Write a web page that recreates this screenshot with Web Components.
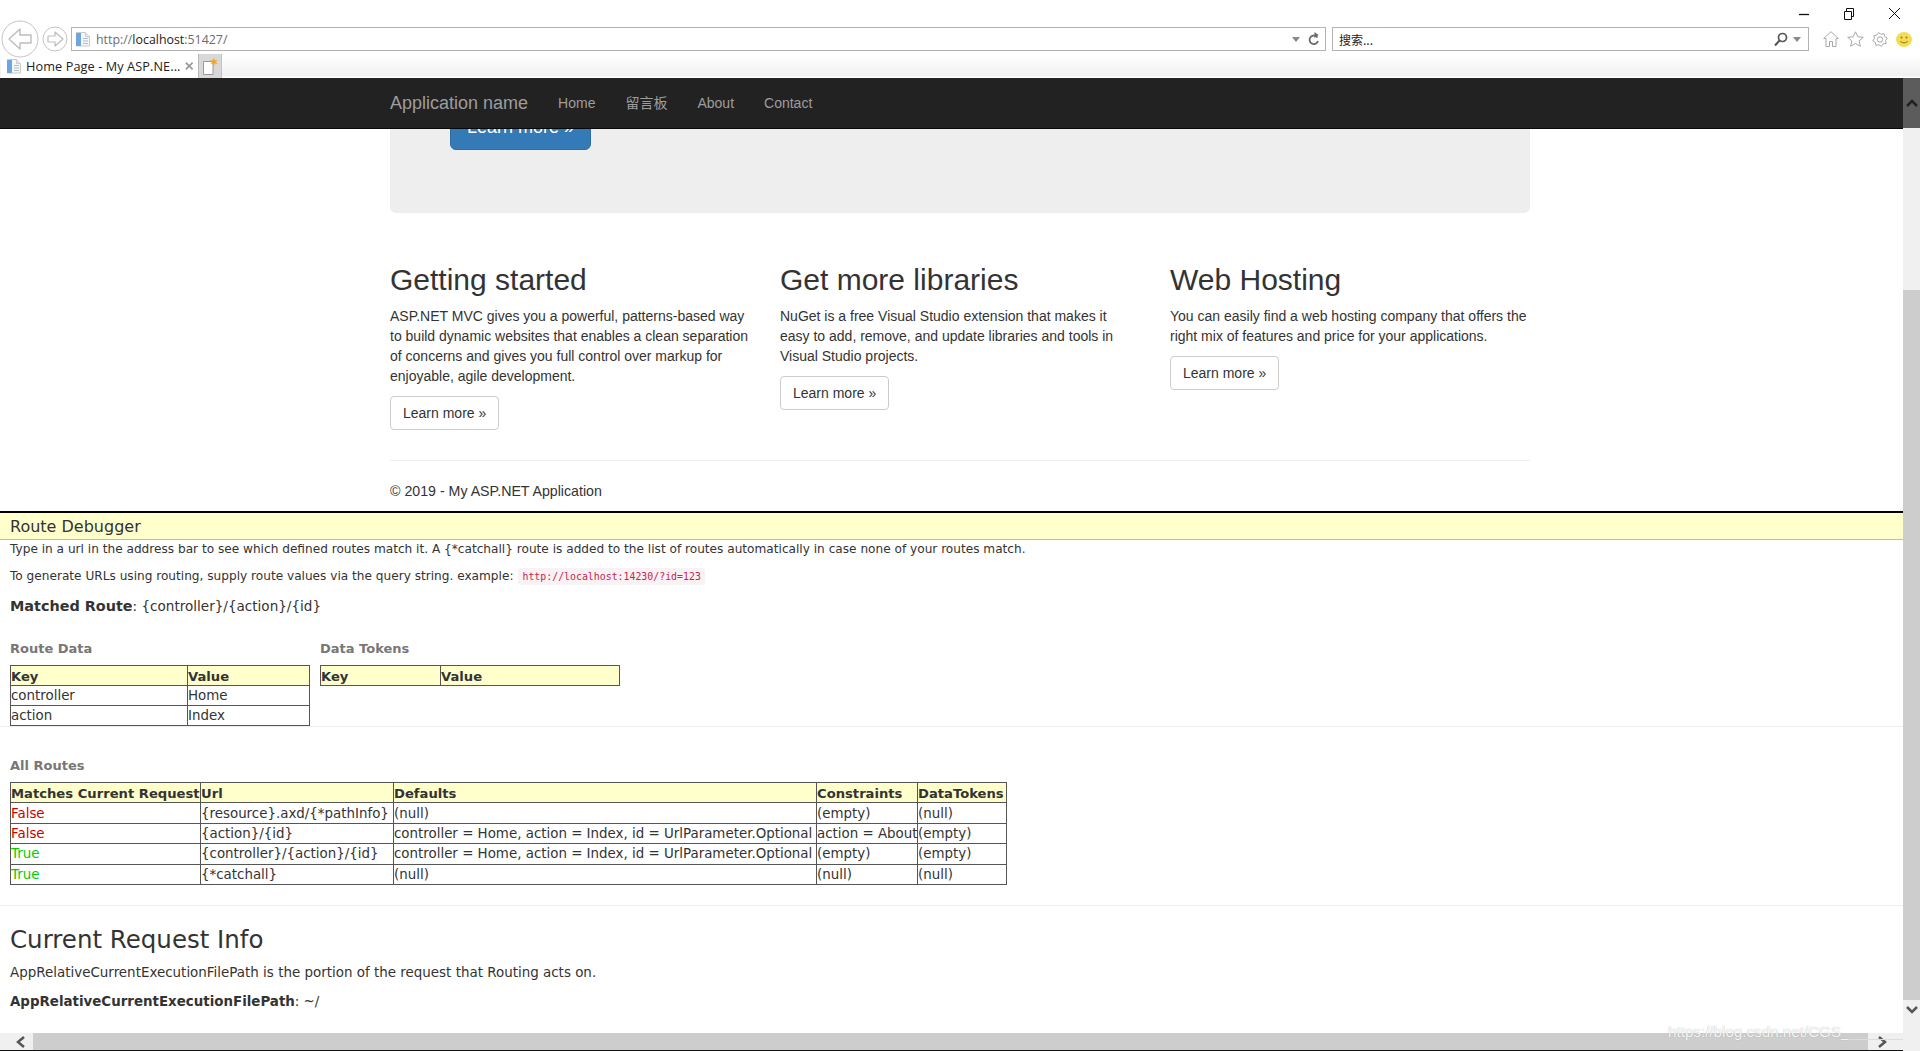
<!DOCTYPE html>
<html><head><meta charset="utf-8"><title>Home Page - My ASP.NET Application</title>
<style>
html,body{margin:0;height:100%;overflow:hidden;background:#fff}
app-shell{display:flex;flex-direction:column;height:1051px;width:1920px;position:relative;overflow:hidden}
</style></head><body>
<app-shell>
  <ie-chrome></ie-chrome>
  <site-navbar></site-navbar>
  <page-view>
    <site-content></site-content>
    <route-debugger></route-debugger>
  </page-view>
  <h-scrollbar></h-scrollbar>
  <v-scrollbar></v-scrollbar>
</app-shell>
<script>
function def(name, html){
  customElements.define(name, class extends HTMLElement{
    constructor(){super();this.attachShadow({mode:'open'}).innerHTML=html;}
  });
}
const pageIcon=`<svg width="16" height="16" viewBox="0 0 16 16" style="flex:none"><path d="M1.500 1.500h9l4 4v9.500h-13z" fill="#f4f6f8" stroke="#c8ccd0"/><path d="M10.500 1.500v4h4" fill="#e4e8ec" stroke="#c8ccd0"/><rect x="1" y="2" width="5" height="13" fill="#6ba6dc"/><path d="M8 7.500h5M8 10h5M8 12.500h5" stroke="#b5bcc4"/></svg>`;
let gear='';
for(let i=0;i<16;i++){const a=(i+.5)*Math.PI/8,r=i%2?7.4:5.6;gear+=(i?'L':'M')+(8+r*Math.cos(a)).toFixed(2)+' '+(7.5+r*.95*Math.sin(a)).toFixed(2);}
gear+='z';
def('ie-chrome',`<style>
:host{display:block;height:78px;background:#fff;font:12px "Open Sans","Noto Sans",sans-serif;color:#333;flex:none}
.win{height:27px;display:flex;justify-content:flex-end;align-items:center;padding:0 19px 0 0;gap:33px;box-sizing:border-box}
.win svg{display:block}
.bar{height:27px;display:flex;align-items:flex-start;box-sizing:border-box;padding-left:1px;position:relative}
.nav{display:flex;align-items:flex-start;width:70px;flex:none}
.field{height:24px;box-sizing:border-box;border:1px solid #b3b3b3;display:flex;align-items:center;background:#fff}
.addr{width:1255px;flex:none;padding:0 5px 0 3px;gap:5px}
.addr .u{flex:1;color:#6d6d6d;font-size:12.400px}.addr .u b{font-weight:400;color:#222}
.search{width:477px;flex:none;margin-left:6px;padding:0 7px 0 6px;font:12px "Noto Sans CJK SC",sans-serif;color:#222}
.search span{flex:1}
.tools{display:flex;gap:8px;margin-left:14px;align-items:center;height:24px}
.tools svg{display:block}
.tabs{height:24px;display:flex;background:linear-gradient(#fff 0,#fff 2px,#efefef 22px,#fff 23px);align-items:stretch}
.tab{margin-left:1px;width:198px;box-sizing:border-box;background:#fff;display:flex;align-items:center;padding:0 5px 0 5px;gap:4px;font-size:12.700px;color:#222;white-space:nowrap;border-right:1px solid #b8b8b8;letter-spacing:.1px}
.tab span{flex:1}
.new{width:23px;background:#d8d8d8;border-right:1px solid #c2c2c2;display:flex;align-items:center;justify-content:center;box-sizing:border-box}
</style>
<div class="win">
<svg width="12" height="12" viewBox="0 0 12 12"><path d="M1 6.500h10" stroke="#111" stroke-width="1.300"/></svg>
<svg width="12" height="12" viewBox="0 0 12 12" fill="none" stroke="#111"><path d="M1.500 3.500h7v8h-7z"/><path d="M3.500 3V.500h7v8H8.500"/></svg>
<svg width="13" height="13" viewBox="0 0 13 13"><path d="M1 1l11 11M12 1L1 12" stroke="#111" fill="none"/></svg>
</div>
<div class="bar">
 <div class="nav">
  <svg width="38" height="38" viewBox="0 0 38 38" style="flex:none;margin-top:-7px"><circle cx="19" cy="19" r="18" fill="#fff" stroke="#c4c4c4"/><path d="M8 19l11-10v6h11v8H19v6z" fill="#fff" stroke="#bdbdbd" stroke-width="1.400" stroke-linejoin="round"/></svg>
  <svg width="26" height="26" viewBox="0 0 26 26" style="flex:none;margin:-1px 0 0 3px"><circle cx="13" cy="13" r="12" fill="#fff" stroke="#c4c4c4"/><path d="M21 13l-8-7v4H6v6h7v4z" fill="#fff" stroke="#bdbdbd" stroke-width="1.200" stroke-linejoin="round"/></svg>
 </div>
 <div class="field addr">${pageIcon}<span class="u">http://<b>localhost</b>:51427/</span>
  <svg width="8" height="5" viewBox="0 0 8 5"><path d="M0 0h8L4 5z" fill="#888"/></svg>
  <svg width="12" height="14" viewBox="0 0 12 14" style="margin-left:3px"><path d="M9.500 5.500A4.300 4.300 0 1 0 10 9" fill="none" stroke="#6a6a6a" stroke-width="1.800"/><path d="M6.500 0v6l4-3z" fill="#6a6a6a"/></svg>
 </div>
 <div class="field search"><span>搜索...</span>
  <svg width="14" height="15" viewBox="0 0 14 15"><circle cx="8.500" cy="5.500" r="4" fill="none" stroke="#555" stroke-width="1.700"/><path d="M5.500 8.500L1 13.500" stroke="#555" stroke-width="2"/></svg>
  <svg width="8" height="5" viewBox="0 0 8 5" style="margin-left:5px"><path d="M0 0h8L4 5z" fill="#888"/></svg>
 </div>
 <div class="tools">
  <svg width="16" height="16" viewBox="0 0 16 16" fill="#fff" stroke="#a8a8a8"><path d="M8 .700L.700 7.500h2.300v8h3.500v-5h3v5h3.500v-8h2.300z"/></svg>
  <svg width="17" height="16" viewBox="0 0 17 16" fill="#fff" stroke="#a8a8a8"><path d="M8.500 .800l2.300 5 5.500.5-4.200 3.600 1.300 5.400-4.900-2.800-4.900 2.800 1.300-5.400L.7 6.300l5.500-.5z"/></svg>
  <svg width="16" height="15" viewBox="0 0 16 15" fill="#fff" stroke="#a8a8a8"><path d="${gear}"/><circle cx="8" cy="7.500" r="2.700"/></svg>
  <svg width="16" height="15" viewBox="0 0 16 15"><ellipse cx="8" cy="7.500" rx="8" ry="7.500" fill="#f4dc55"/><circle cx="5.500" cy="5.500" r="1" fill="#8a7a20"/><circle cx="10.500" cy="5.500" r="1" fill="#8a7a20"/><path d="M4 9c2 2.500 6 2.500 8 0" fill="none" stroke="#8a7a20"/></svg>
 </div>
</div>
<div class="tabs">
 <div class="tab">${pageIcon}<span>Home Page - My ASP.NE...</span><svg width="10" height="10" viewBox="0 0 10 10"><path d="M1 1l8 8M9 1l-8 8" stroke="#9a9a9a" stroke-width="2"/></svg></div>
 <div class="new"><svg width="15" height="17" viewBox="0 0 15 17"><path d="M.500 3.500h9.500v13H.500z" fill="#fff" stroke="#999"/><path d="M11 0l1 2.500 2.500-.5-1.500 2 1.500 2-2.500-.5-1 2.500-1-2.500-2.500.5 1.500-2L7 2l2.500.5z" fill="#f5a623"/></svg></div>
</div>`);
def('site-navbar',`<style>
:host{display:block;height:51px;box-sizing:border-box;background:#222;border-bottom:1px solid #080808;font:14px/20px "Liberation Sans",Arial,"Noto Sans CJK SC",sans-serif;color:#9d9d9d;flex:none}
.c{width:1140px;margin:0 auto;display:flex;align-items:center;height:50px}
.b{font-size:18px;margin-right:15px}
a{padding:15px;color:#9d9d9d;text-decoration:none;white-space:nowrap}
</style><div class="c"><span class="b">Application name</span><a>Home</a><a>留言板</a><a>About</a><a>Contact</a></div>`);
def('page-view',`<style>:host{display:block;flex:1;min-height:0;overflow:hidden;font:14px/20px "Liberation Sans",Arial,sans-serif;color:#333}</style><slot></slot>`);
def('info-col',`<style>
:host{display:block;width:360px;box-sizing:content-box;padding:0 15px}
h2{font-weight:500;font-size:30px;line-height:33px;margin:20px 0 10px;color:#333}
p{margin:0 0 10px}
a{display:inline-block;padding:6px 12px;border:1px solid #ccc;border-radius:4px;line-height:20px;color:#333}
</style><h2><slot name="t"></slot></h2><p><slot></slot></p><p><a>Learn more »</a></p>`);
def('site-content',`<style>
:host{display:block;width:1140px;margin:0 auto}
.j{background:#eee;margin-bottom:30px;padding:0 60px;height:84px;overflow:hidden;border-radius:0 0 6px 6px}
.l{display:block;width:141px;height:46px;margin-top:-25px;box-sizing:border-box;background:#337ab7;border:1px solid #2e6da4;border-radius:6px;color:#fff;font-size:18px;line-height:24px;padding:10px 16px;white-space:nowrap}
.r{display:flex;margin:0 -15px}
hr{border:0;border-top:1px solid #eee;margin:20px 0}
p{margin:0 0 10px;font-size:14.200px}
</style>
<div class="j"><a class="l">Learn more »</a></div>
<div class="r">
<info-col><span slot="t">Getting started</span>ASP.NET MVC gives you a powerful, patterns-based way to build dynamic websites that enables a clean separation of concerns and gives you full control over markup for enjoyable, agile development.</info-col>
<info-col><span slot="t">Get more libraries</span>NuGet is a free Visual Studio extension that makes it easy to add, remove, and update libraries and tools in Visual Studio projects.</info-col>
<info-col><span slot="t">Web Hosting</span>You can easily find a web hosting company that offers the right mix of features and price for your applications.</info-col>
</div>
<hr><p>© 2019 - My ASP.NET Application</p>`);
customElements.define('route-table',class extends HTMLElement{
  constructor(){super();this.attachShadow({mode:'open'});}
  connectedCallback(){
    const cols=this.getAttribute('cols').split(',').map(Number);
    const rows=JSON.parse(this.getAttribute('rows'));
    const h=this.getAttribute('cell')||'15';
    const w=cols.reduce((a,b)=>a+b,0);
    const colour=v=>v==='False'?' style="color:#c00"':v==='True'?' style="color:#0c0"':'';
    this.shadowRoot.innerHTML=`<style>
:host{display:block;width:${w+1}px}
table{border-collapse:collapse;table-layout:fixed;width:${w+1}px;font:13.400px/15px "DejaVu Sans",Verdana,sans-serif;color:#333}
th,td{border:1px solid #555;padding:2px 0 2px 0;height:${h}px;text-align:left;white-space:nowrap;overflow:visible;box-sizing:content-box}
th{background:#ffc;font-weight:700;font-size:13.150px;padding:3px 0 1px 0}
</style><table><colgroup>${cols.map(c=>`<col style="width:${c}px">`).join('')}</colgroup>
${rows.map((r,i)=>`<tr>${r.map(c=>i===0?`<th>${c}</th>`:`<td${colour(c)}>${c}</td>`).join('')}</tr>`).join('')}</table>`;
  }
});
def('route-debugger',`<style>
:host{display:block;border-top:2px solid #000;font:12.130px/16px "DejaVu Sans",Verdana,sans-serif;color:#333}
.h{height:27px;box-sizing:border-box;background:#ffc;border-bottom:1px solid #bbb;padding:0 10px;font-size:16px;line-height:28px}
.b{padding:0 10px}
p{margin:0}
.l1,.l2{line-height:17px}
.l1{padding-top:1px}
.l2{margin-top:10px;display:flex;align-items:center;gap:5px}
code{font:9.900px/17px "DejaVu Sans Mono",monospace;color:#c7254e;background:#f9f2f4;padding:0 4px;border-radius:3px;display:block}
.m{margin-top:11px;line-height:20px;font-size:13.560px}.m b{font-size:14.400px}
.two{display:flex;gap:10px;margin-top:25px}
h3{margin:0 0 8px;font-size:13px;line-height:16px;color:#777;font-weight:700}
hr{border:0;border-top:1px solid #eee;margin:0}
.all{margin-top:31px}
h2{font-weight:400;font-size:24.500px;line-height:28px;margin:20px 0 11px}
.i{line-height:16px;font-size:13.450px}.j{margin-top:13px;line-height:16px;font-size:13.400px}
</style>
<div class="h">Route Debugger</div>
<div class="b">
<p class="l1">Type in a url in the address bar to see which defined routes match it. A {*catchall} route is added to the list of routes automatically in case none of your routes match.</p>
<p class="l2"><span>To generate URLs using routing, supply route values via the query string. example:</span><code>http://localhost:14230/?id=123</code></p>
<p class="m"><b>Matched Route</b>: {controller}/{action}/{id}</p>
<div class="two">
 <div><h3>Route Data</h3><route-table cols="177,122" rows='[["Key","Value"],["controller","Home"],["action","Index"]]'></route-table></div>
 <div><h3>Data Tokens</h3><route-table cols="120,179" rows='[["Key","Value"]]'></route-table></div>
</div>
</div>
<hr>
<div class="b">
<div class="all"><h3>All Routes</h3><route-table cell="15.400" cols="190,193,423,101,89" rows='[["Matches Current Request","Url","Defaults","Constraints","DataTokens"],["False","{resource}.axd/{*pathInfo}","(null)","(empty)","(null)"],["False","{action}/{id}","controller = Home, action = Index, id = UrlParameter.Optional","action = About","(empty)"],["True","{controller}/{action}/{id}","controller = Home, action = Index, id = UrlParameter.Optional","(empty)","(empty)"],["True","{*catchall}","(null)","(null)","(null)"]]'></route-table></div>
</div>
<hr style="margin-top:20px">
<div class="b">
<h2>Current Request Info</h2>
<p class="i">AppRelativeCurrentExecutionFilePath is the portion of the request that Routing acts on.</p>
<p class="j"><b>AppRelativeCurrentExecutionFilePath</b>: ~/</p>
</div>`);
def('h-scrollbar',`<style>
:host{display:flex;height:18px;flex:none;background:#f0f0f0;border-bottom:1px solid #111;box-sizing:border-box;align-items:stretch;padding-right:17px;position:relative}
.a{width:33px;flex:none;display:flex;align-items:center;justify-content:flex-end;padding-right:7px;box-sizing:border-box}
.b{width:35px;justify-content:flex-start;padding:0 0 0 9px}
.t{flex:1;background:#cdcdcd}
.w{position:absolute;left:1668px;top:-12px;font:15.200px/22px "Liberation Sans",sans-serif;color:rgba(255,255,255,.9);text-shadow:0 0 1px rgba(140,140,140,.7);white-space:nowrap}
.ln{position:absolute;left:1848px;right:10px;top:6px;border-top:1px solid #ddd}
</style>
<div class="a"><svg width="10" height="12" viewBox="0 0 10 12"><path d="M8 1L2 6l6 5" fill="none" stroke="#555" stroke-width="2.500"/></svg></div><div class="t"></div>
<div class="a b"><svg width="10" height="12" viewBox="0 0 10 12"><path d="M2 1l6 5-6 5" fill="none" stroke="#555" stroke-width="2.500"/></svg></div>
<span class="w">https://blog.csdn.net/CGS_</span><span class="ln"></span>`);
def('v-scrollbar',`<style>
:host{position:absolute;top:78px;right:0;bottom:0;width:17px;background:#f0f0f0;display:flex;flex-direction:column}
.top{height:50px;flex:none;background:#5c5c5c;display:flex;align-items:center;justify-content:center}
.s{height:162px;flex:none}
.t{flex:none;height:710px;background:#cdcdcd}
.d{flex:1;display:flex;justify-content:center;padding-top:5px;box-sizing:border-box}
svg{display:block}
</style>
<div class="top"><svg width="12" height="9" viewBox="0 0 12 9"><path d="M1 7l5-5 5 5" fill="none" stroke="#222" stroke-width="2.500"/></svg></div>
<div class="s"></div><div class="t"></div>
<div class="d"><svg width="12" height="9" viewBox="0 0 12 9"><path d="M1 2l5 5 5-5" fill="none" stroke="#555" stroke-width="2.500"/></svg></div>`);
def('app-shell',`<slot></slot>`);
</script>
</body></html>
